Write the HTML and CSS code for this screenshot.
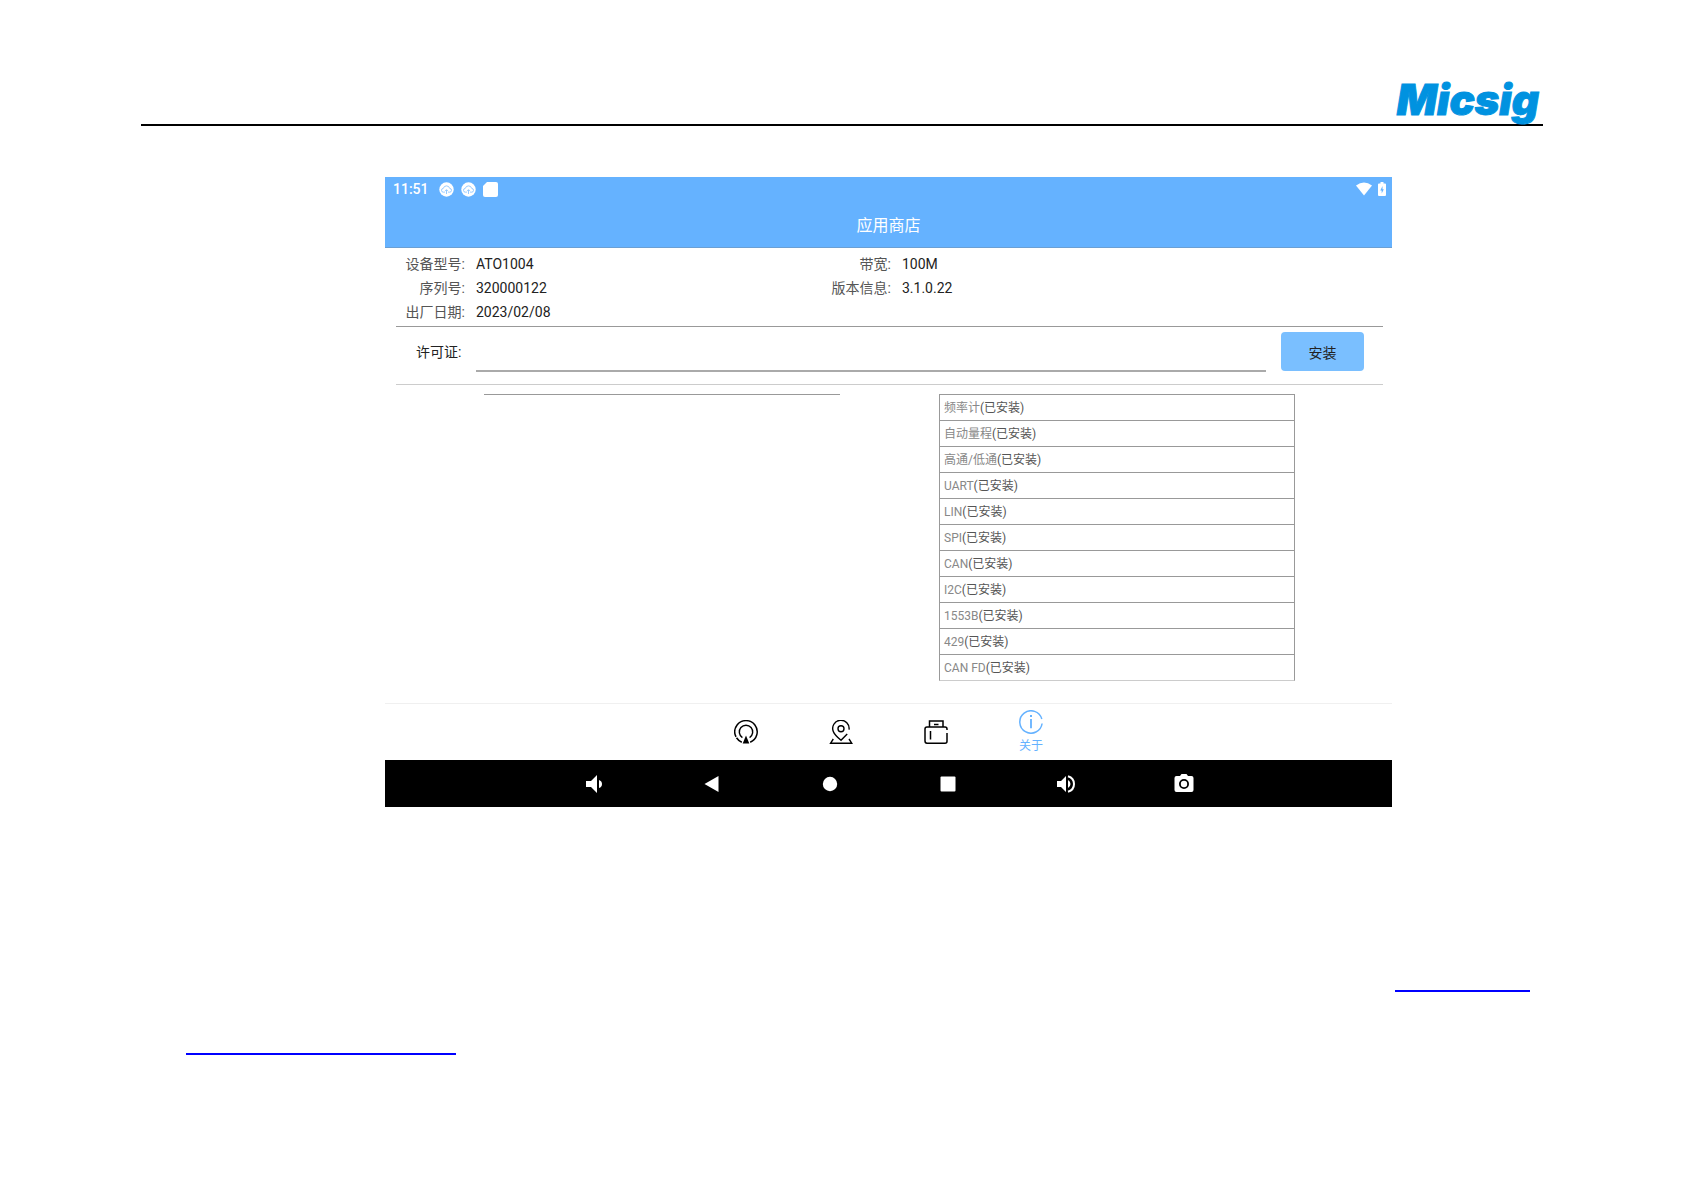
FILE: index.html
```html
<!DOCTYPE html>
<html lang="zh-CN">
<head>
<meta charset="utf-8">
<meta name="viewport" content="width=device-width, initial-scale=1">
<title>应用商店 - Micsig</title>
<link rel="stylesheet" href="styles.css">
</head>
<body>
<div class="page">
  <header class="page-header"><span class="brand">Micsig</span></header>

  <main class="device">
    <div class="app-head">
      <div class="status-bar">
        <span class="clock">11:51</span>
        <svg class="status-icon" viewBox="0 0 15 15"><circle cx="7.500" cy="7.500" r="7.200" fill="#fff"/><path d="M5.800 10.200H4.500a1.900 1.900 0 0 1-.2-3.800 3.300 3.300 0 0 1 6.400 0 1.900 1.900 0 0 1-.2 3.800H9.200M7.500 12V7.800M6 9.200l1.500-1.500L9 9.200" fill="none" stroke="#8cc5ff" stroke-width=".9"/></svg>
        <svg class="status-icon" viewBox="0 0 15 15"><circle cx="7.500" cy="7.500" r="7.200" fill="#fff"/><path d="M5.800 10.200H4.500a1.900 1.900 0 0 1-.2-3.800 3.300 3.300 0 0 1 6.400 0 1.900 1.900 0 0 1-.2 3.800H9.200M7.500 12V7.800M6 9.200l1.500-1.500L9 9.200" fill="none" stroke="#8cc5ff" stroke-width=".9"/></svg>
        <svg class="status-icon" viewBox="0 0 15 15"><path d="M4 0h9a2 2 0 0 1 2 2v11a2 2 0 0 1-2 2H2a2 2 0 0 1-2-2V4z" fill="#fff"/></svg>
        <span class="status-right">
          <svg class="wifi" viewBox="0 0 16 14"><path d="M0 3.500Q8-2.500 16 3.500L8 13.500z" fill="#fff"/></svg>
          <svg class="battery" viewBox="0 0 8 14"><path d="M2.500 0h3v1.500H7a1 1 0 0 1 1 1V13a1 1 0 0 1-1 1H1a1 1 0 0 1-1-1V2.500a1 1 0 0 1 1-1h1.500z" fill="#fff"/><path d="M4.500 4L2.300 8.400h1.400V11.500L5.800 7.200H4.500z" fill="#65b2ff"/></svg>
        </span>
      </div>
      <h1 class="title">应用商店</h1>
    </div>

    <div class="content">
      <section class="info">
        <dl class="facts">
          <dt>设备型号:</dt><dd>ATO1004</dd>
          <dt>序列号:</dt><dd>320000122</dd>
          <dt>出厂日期:</dt><dd>2023/02/08</dd>
        </dl>
        <dl class="facts">
          <dt>带宽:</dt><dd>100M</dd>
          <dt>版本信息:</dt><dd>3.1.0.22</dd>
        </dl>
      </section>

      <form class="licence">
        <label class="licence-label" for="licence">许可证:</label>
        <input class="licence-input" id="licence" type="text">
        <button class="install" type="button">安装</button>
      </form>

      <section class="options">
        <div class="available"></div>
        <ul class="installed">
          <li>频率计<span>(已安装)</span></li>
          <li>自动量程<span>(已安装)</span></li>
          <li>高通/低通<span>(已安装)</span></li>
          <li>UART<span>(已安装)</span></li>
          <li>LIN<span>(已安装)</span></li>
          <li>SPI<span>(已安装)</span></li>
          <li>CAN<span>(已安装)</span></li>
          <li>I2C<span>(已安装)</span></li>
          <li>1553B<span>(已安装)</span></li>
          <li>429<span>(已安装)</span></li>
          <li>CAN FD<span>(已安装)</span></li>
        </ul>
      </section>
    </div>

    <nav class="tabs">
      <button class="tab" type="button" aria-label="在线">
        <svg class="tab-icon" viewBox="0 0 24 24"><path d="M7.800 22.200A11.200 11.200 0 1 1 16.200 22.200" fill="none" stroke="#000" stroke-width="1.500" stroke-dasharray="7 1 60"/><path d="M8.400 17.600A6.700 6.700 0 1 1 15.600 17.600" fill="none" stroke="#000" stroke-width="1.400"/><path d="M12 15.500L15.300 23.500H8.700z"/></svg>
      </button>
      <button class="tab" type="button" aria-label="本地">
        <svg class="tab-icon" viewBox="0 0 24 24" fill="none" stroke="#000" stroke-width="1.400"><path d="M20 9.700A8.200 8.200 0 1 0 4.300 11.500C5.500 14.700 9 17.800 12 20.300L18.200 14"/><circle cx="12" cy="8.700" r="3"/><path d="M4.300 19L1.600 23.200H22.700L20 19"/></svg>
      </button>
      <button class="tab" type="button" aria-label="U盘">
        <svg class="tab-icon" viewBox="0 0 24 24" fill="none" stroke="#000" stroke-width="1.500"><path d="M5.500 7V1H19V7M10 4.500H14.500"/><path d="M23 10V9Q23 7 21 7H3Q1 7 1 9V21Q1 23.200 3 23.200H21Q23 23.200 23 21.200V13M6.500 11V19.500"/></svg>
      </button>
      <button class="tab active" type="button">
        <svg class="tab-icon" viewBox="0 0 24 24"><path d="M22.800 9A11.200 11.200 0 1 0 23.100 13.500" fill="none" stroke="#65b2ff" stroke-width="1.500"/><path d="M11 6h2M12 9v9.200" fill="none" stroke="#65b2ff" stroke-width="1.800"/></svg>
        <span>关于</span>
      </button>
    </nav>

    <nav class="system-bar">
      <button class="key" type="button" aria-label="音量减"><svg viewBox="0 0 24 24"><path d="M4 9h5l6-6v18l-6-6H4zM17 8q3 1 3 4t-3 4z"/></svg></button>
      <button class="key" type="button" aria-label="返回"><svg viewBox="0 0 24 24"><path d="M4.500 12L18.500 4v16z"/></svg></button>
      <button class="key" type="button" aria-label="主页"><svg viewBox="0 0 24 24"><circle cx="12" cy="12" r="7.200"/></svg></button>
      <button class="key" type="button" aria-label="最近"><svg viewBox="0 0 24 24"><rect x="4.500" y="4.500" width="15" height="15" rx="1"/></svg></button>
      <button class="key" type="button" aria-label="音量加"><svg viewBox="0 0 24 24"><path d="M3 9h4l5-5v16l-5-5H3zM14 8q2.500 1.500 2.500 4T14 16z"/><path d="M14 4.200Q20 6 20 12t-6 7.800" fill="none" stroke="#fff" stroke-width="2"/></svg></button>
      <button class="key" type="button" aria-label="截图"><svg viewBox="0 0 24 24"><path fill-rule="evenodd" d="M8 4l1.500-2h5L16 4h3.500Q21.500 4 21.500 6v12q0 2-2 2h-15q-2 0-2-2V6q0-2 2-2zM12 7a5 5 0 1 0 0 10 5 5 0 0 0 0-10z"/><circle cx="12" cy="12" r="3.200"/></svg></button>
    </nav>
  </main>

  <div class="references">
    <a class="ref ref-short" href="#" aria-label="Micsig"></a>
    <a class="ref ref-long" href="#" aria-label="应用商店"></a>
  </div>
</div>
</body>
</html>
```
FILE: styles.css
```css
* { box-sizing: border-box; }

body {
  margin: 0;
  background: #fff;
  color: #222;
  font-family: Roboto, "Noto Sans CJK SC", sans-serif;
  font-size: 14px;
}

button {
  margin: 0;
  padding: 0;
  border: 0;
  background: none;
  font: inherit;
}

svg { display: block; }

.page { padding: 76px 142px 0 141px; }

.page-header {
  display: flex;
  justify-content: flex-end;
  height: 50px;
  padding-right: 4px;
  border-bottom: 2px solid #000;
}

.brand {
  color: #0092e0;
  font-family: Inter, sans-serif;
  font-size: 42px;
  font-style: italic;
  font-weight: 900;
  line-height: 48px;
  -webkit-text-stroke: 1px #0092e0;
}

.device { margin: 51px 151px 0 244px; }

.app-head {
  height: 71px;
  border-bottom: 1px solid #6b9fd3;
  background: #65b2ff;
  color: #fff;
}

.status-bar {
  display: flex;
  align-items: center;
  gap: 7px;
  height: 24px;
  padding: 0 6px 0 8px;
}

.clock {
  margin-right: 3px;
  font-weight: 500;
  line-height: 24px;
}

.status-icon { width: 15px; height: 15px; }

.status-right {
  display: flex;
  gap: 6px;
  margin-left: auto;
}

.wifi { width: 16px; height: 14px; }
.battery { width: 8px; height: 14px; }

.title {
  margin: 0;
  font-size: 16px;
  font-weight: 400;
  line-height: 50px;
  text-align: center;
}

.content { padding: 0 9px 0 11px; }

.info {
  display: grid;
  grid-template-columns: 426fr 561fr;
  height: 79px;
  padding-top: 4px;
  border-bottom: 1px solid #999;
}

.facts {
  display: grid;
  grid-template-columns: 69px 1fr;
  grid-auto-rows: 24px;
  column-gap: 11px;
  margin: 0;
  line-height: 24px;
}

.facts dt { color: #555; text-align: right; }
.facts dd { margin: 0; }

.licence {
  display: flex;
  align-items: flex-start;
  height: 58px;
  margin: 0;
  padding: 5px 19px 0 20px;
  border-bottom: 1px solid #ccc;
}

.licence-label { width: 60px; line-height: 40px; }

.licence-input {
  flex: 1;
  min-width: 0;
  height: 40px;
  padding: 0;
  border: 0;
  border-bottom: 2px solid #aaa;
  background: none;
  font: inherit;
}

.install {
  width: 83px;
  height: 39px;
  margin-left: 15px;
  border-radius: 4px;
  background: #7abfff;
  color: #222;
}

.options {
  display: grid;
  grid-template-columns: 1fr 1fr;
  gap: 99px;
  padding: 9px 88px 22px;
}

.available { border-top: 1px solid #999; }

.installed {
  margin: 0;
  padding: 0;
  border: 1px solid #999;
  border-bottom-color: #ccc;
  color: #888;
  font-size: 12px;
  list-style: none;
}

.installed li {
  height: 26px;
  padding-left: 4px;
  border-bottom: 1px solid #999;
  line-height: 26px;
}

.installed li:last-child { height: 25px; border-bottom: 0; }
.installed span { color: #555; }

.tabs {
  display: flex;
  justify-content: center;
  height: 57px;
  border-top: 1px solid #f0f0f0;
}

.tab {
  display: flex;
  flex-direction: column;
  align-items: center;
  justify-content: center;
  gap: 4px;
  width: 95px;
  color: #65b2ff;
  font-size: 12px;
  line-height: 16px;
}

.tab-icon { width: 24px; height: 24px; }

.system-bar {
  display: flex;
  justify-content: center;
  height: 47px;
  background: #000;
}

.key {
  display: flex;
  align-items: center;
  justify-content: center;
  width: 118px;
}

.key svg { width: 24px; height: 24px; fill: #fff; }

.references {
  display: flex;
  flex-direction: column;
  gap: 30px;
  padding: 152px 13px 0 45px;
}

.ref { height: 33px; border-bottom: 2px solid #00f; }
.ref-short { align-self: flex-end; width: 135px; }
.ref-long { width: 270px; }
```
